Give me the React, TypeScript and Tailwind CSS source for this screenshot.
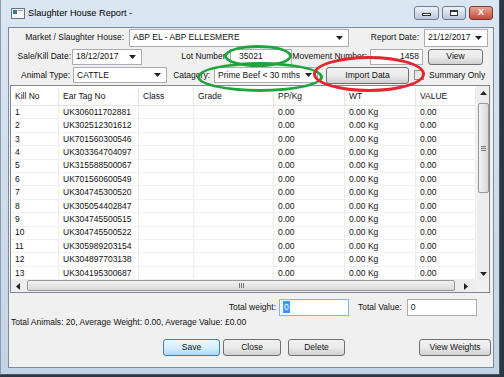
import React from "react";

const rows = [
  "UK306011702881",
  "UK302512301612",
  "UK701560300546",
  "UK303364704097",
  "UK315588500067",
  "UK701560600549",
  "UK304745300520",
  "UK305054402847",
  "UK304745500515",
  "UK304745500522",
  "UK305989203154",
  "UK304897703138",
  "UK304195300687",
];

const cols = [
  { name: "Kill No", w: "w-[48px]" },
  { name: "Ear Tag No", w: "w-[80px]" },
  { name: "Class", w: "w-[55px]" },
  { name: "Grade", w: "w-[80px]" },
  { name: "PP/Kg", w: "w-[71px]" },
  { name: "WT", w: "w-[71px]" },
  { name: "VALUE", w: "flex-1" },
];

const Arrow = ({ dir }: { dir: "up" | "down" | "left" | "right" }) => {
  const pts = {
    up: "0,4 3.5,0 7,4",
    down: "0,0 3.5,4 7,0",
    left: "4,0 0,3.5 4,7",
    right: "0,0 4,3.5 0,7",
  }[dir];
  const size = dir === "up" || dir === "down" ? { w: 7, h: 4 } : { w: 4, h: 7 };
  return (
    <svg width={size.w} height={size.h} viewBox={`0 0 ${size.w} ${size.h}`}>
      <polygon points={pts} fill="#222" />
    </svg>
  );
};

const Combo = ({ text, className }: { text: string; className: string }) => (
  <div className={`flex items-center justify-between bg-white border border-[#abadb3] pl-[3px] pr-[5px] ${className}`}>
    <span className="whitespace-nowrap">{text}</span>
    <Arrow dir="down" />
  </div>
);

const Button = ({ text, className, focus }: { text: string; className: string; focus?: boolean }) => (
  <div
    className={`flex items-center justify-center rounded-[3px] border ${
      focus
        ? "border-[#3c7fb1] bg-gradient-to-b from-[#eaf6fd] via-[#d9f0fc] to-[#a7d9f5]"
        : "border-[#707070] bg-gradient-to-b from-[#f2f2f2] via-[#ebebeb] to-[#cfcfcf]"
    } ${className}`}
  >
    {text}
  </div>
);

const Label = ({ text, className }: { text: string; className: string }) => (
  <div className={`text-right whitespace-nowrap ${className}`}>{text}</div>
);

export default function App() {
  return (
    <div className="w-[504px] h-[377px] bg-[#2b3744] overflow-hidden relative text-[8.5px] text-[#111]" style={{ fontFamily: '"Liberation Sans", Arial, sans-serif' }}>
      <div className="w-[500px] h-[375px] flex flex-col border-l border-[#8e9bab] border-r border-b border-r-[#4a5868] border-b-[#4a5868] bg-gradient-to-b from-[#dbe6f3] to-[#c3d3e6]">
        {/* title bar */}
        <div className="h-[27px] flex items-center pl-[10px] pr-[6px] shrink-0">
          <svg width="14" height="11" viewBox="0 0 14 11">
            <rect x="0.5" y="0.5" width="13" height="10" fill="#f4f6f8" stroke="#6a7280" />
            <rect x="2" y="2" width="4" height="4" fill="#2f7f8f" />
            <rect x="7" y="2" width="5" height="1" fill="#9aa3ad" />
          </svg>
          <span className="ml-[3px] text-[9.2px] text-black">Slaughter House Report -</span>
          <div className="ml-auto flex gap-[3px] mt-[-2px]">
            <div className="w-[25px] h-[14px] rounded-[3px] border border-[#6d7c8f] bg-gradient-to-b from-[#eef3f9] to-[#b9c8da] flex items-center justify-center">
              <div className="w-[9px] h-[3px] border border-[#333] bg-white mt-[3px]" />
            </div>
            <div className="w-[24px] h-[14px] rounded-[3px] border border-[#6d7c8f] bg-gradient-to-b from-[#eef3f9] to-[#b9c8da] flex items-center justify-center">
              <div className="w-[8px] h-[6px] border border-[#333] border-t-2 bg-white" />
            </div>
            <div className="w-[24px] h-[14px] rounded-[3px] border border-[#7a3a30] bg-gradient-to-b from-[#e9a293] to-[#c44a38] flex items-center justify-center">
              <span className="text-white font-bold text-[9px] leading-none">X</span>
            </div>
          </div>
        </div>

        {/* client panel */}
        <div className="ml-[7px] mr-[5px] mb-[6px] flex-1 bg-[#f0f0f0] border border-[#7b8a9c] flex flex-col">
          {/* row 1 */}
          <div className="h-[19px] flex items-center shrink-0">
            <Label text="Market / Slaughter House:" className="w-[115px]" />
            <Combo text="ABP EL - ABP ELLESMERE" className="ml-[5px] w-[220px] h-[18px]" />
            <Label text="Report Date:" className="w-[70px]" />
            <Combo text="21/12/2017" className="ml-[5px] w-[64px] h-[18px]" />
          </div>
          {/* row 2 */}
          <div className="h-[17px] mt-[1px] flex items-center shrink-0">
            <Label text="Sale/Kill Date:" className="w-[62px]" />
            <Combo text="18/12/2017" className="ml-[1px] w-[70px] h-[16px]" />
            <Label text="Lot Number:" className="w-[86px]" />
            <div className="ml-[2px] w-[62px] h-[16px] bg-white border border-[#abadb3] flex items-center pl-[8px]">35021</div>
            <Label text="Movement Number:" className="w-[75px]" />
            <div className="ml-[3px] w-[53px] h-[16px] bg-white border border-[#abadb3] flex items-center justify-end pr-[3px]">1458</div>
            <Button text="View" className="ml-[5px] w-[55px] h-[16px]" />
          </div>
          {/* row 3 */}
          <div className="h-[18px] mt-[1px] flex items-center shrink-0">
            <Label text="Animal Type:" className="w-[61px]" />
            <Combo text="CATTLE" className="ml-[3px] w-[94px] h-[16px]" />
            <Label text="Catagory:" className="w-[43px]" />
            <Combo text="Prime Beef < 30 mths" className="ml-[4px] w-[104px] h-[16px]" />
            <Button text="Import Data" className="ml-[8px] w-[83px] h-[17px]" />
            <div className="ml-[5px] w-[10px] h-[10px] border border-[#8f8f8f] bg-gradient-to-br from-[#dcdcdc] to-[#fbfbfb]" />
            <span className="ml-[5px] whitespace-nowrap">Summary Only</span>
          </div>

          {/* grid */}
          <div className="mt-[1px] ml-[1px] w-[480px] h-[208px] border border-[#828790] bg-white flex flex-col shrink-0">
            <div className="flex h-[194px]">
              <div className="flex-1 flex flex-col">
                <div className="h-[20px] flex border-b border-[#e5e5e5] pt-[2px]">
                  {cols.map((c) => (
                    <div key={c.name} className={`${c.w} pl-[4px] flex items-center border-r border-[#e5e5e5]`}>
                      {c.name}
                    </div>
                  ))}
                </div>
                {rows.map((tag, i) => (
                  <div key={tag} className="h-[13.4px] flex border-b border-[#f0f0f0]">
                    {[String(i + 1), tag, "", "", "0.00", "0.00 Kg", "0.00"].map((v, j) => (
                      <div key={j} className={`${cols[j].w} pl-[4px] flex items-center border-r border-[#ececec]`}>
                        {v}
                      </div>
                    ))}
                  </div>
                ))}
              </div>
              {/* vertical scrollbar */}
              <div className="w-[13px] bg-[#ededed] flex flex-col items-center border-l border-[#f4f4f4]">
                <div className="h-[13px] flex items-center justify-center">
                  <Arrow dir="up" />
                </div>
                <div className="mt-[4px] w-[11px] h-[90px] rounded-[2px] border border-[#979797] bg-gradient-to-r from-[#f3f3f3] to-[#d8d8d8] flex flex-col items-center justify-center gap-[1px]">
                  <div className="w-[5px] h-px bg-[#777]" />
                  <div className="w-[5px] h-px bg-[#777]" />
                  <div className="w-[5px] h-px bg-[#777]" />
                </div>
                <div className="mt-auto h-[13px] flex items-center justify-center">
                  <Arrow dir="down" />
                </div>
              </div>
            </div>
            {/* horizontal scrollbar */}
            <div className="h-[12px] flex bg-[#ededed]">
              <div className="w-[14px] flex items-center justify-center">
                <Arrow dir="left" />
              </div>
              <div className="ml-[2px] w-[428px] h-[11px] rounded-[2px] border border-[#979797] bg-gradient-to-b from-[#f3f3f3] to-[#d8d8d8] flex items-center justify-center gap-[1px]">
                <div className="w-px h-[5px] bg-[#777]" />
                <div className="w-px h-[5px] bg-[#777]" />
                <div className="w-px h-[5px] bg-[#777]" />
              </div>
              <div className="flex-1 flex items-center justify-center">
                <Arrow dir="right" />
              </div>
              <div className="w-[13px] bg-[#f0f0f0]" />
            </div>
          </div>

          {/* totals */}
          <div className="mt-[5px] h-[18px] flex items-center shrink-0">
            <Label text="Total weight:" className="w-[267px]" />
            <div className="ml-[3px] w-[70px] h-[17px] bg-white border border-[#7eb4ea] flex items-center pl-[3px]">
              <span className="bg-[#3399ff] text-white px-[1px]">0</span>
            </div>
            <span className="ml-[9px] whitespace-nowrap">Total Value:</span>
            <div className="ml-[5px] w-[70px] h-[17px] bg-white border border-[#abadb3] flex items-center pl-[3px]">0</div>
          </div>
          <div className="h-[12px] flex items-center pl-[2px] whitespace-nowrap shrink-0">
            Total Animals: 20, Average Weight: 0.00, Average Value: £0.00
          </div>

          {/* buttons */}
          <div className="mt-[11px] h-[17px] flex items-center shrink-0">
            <Button text="Save" focus className="ml-[154px] w-[57px] h-[17px]" />
            <Button text="Close" className="ml-[3px] w-[58px] h-[17px]" />
            <Button text="Delete" className="ml-[7px] w-[57px] h-[17px]" />
            <Button text="View Weights" className="ml-[74px] w-[72px] h-[17px]" />
          </div>
        </div>
      </div>

      {/* hand-drawn annotations */}
      <div className="absolute left-[224px] top-[45px] w-[68px] h-[22px] rounded-[50%] border-[3px] border-[#1ea43c]" />
      <div className="absolute left-[197px] top-[62px] w-[126px] h-[30px] rounded-[50%] border-[3px] border-[#1ea43c]" />
      <div className="absolute left-[313px] top-[56px] w-[112px] h-[36px] rounded-[50%] border-[3px] border-[#e3262f]" />
    </div>
  );
}
